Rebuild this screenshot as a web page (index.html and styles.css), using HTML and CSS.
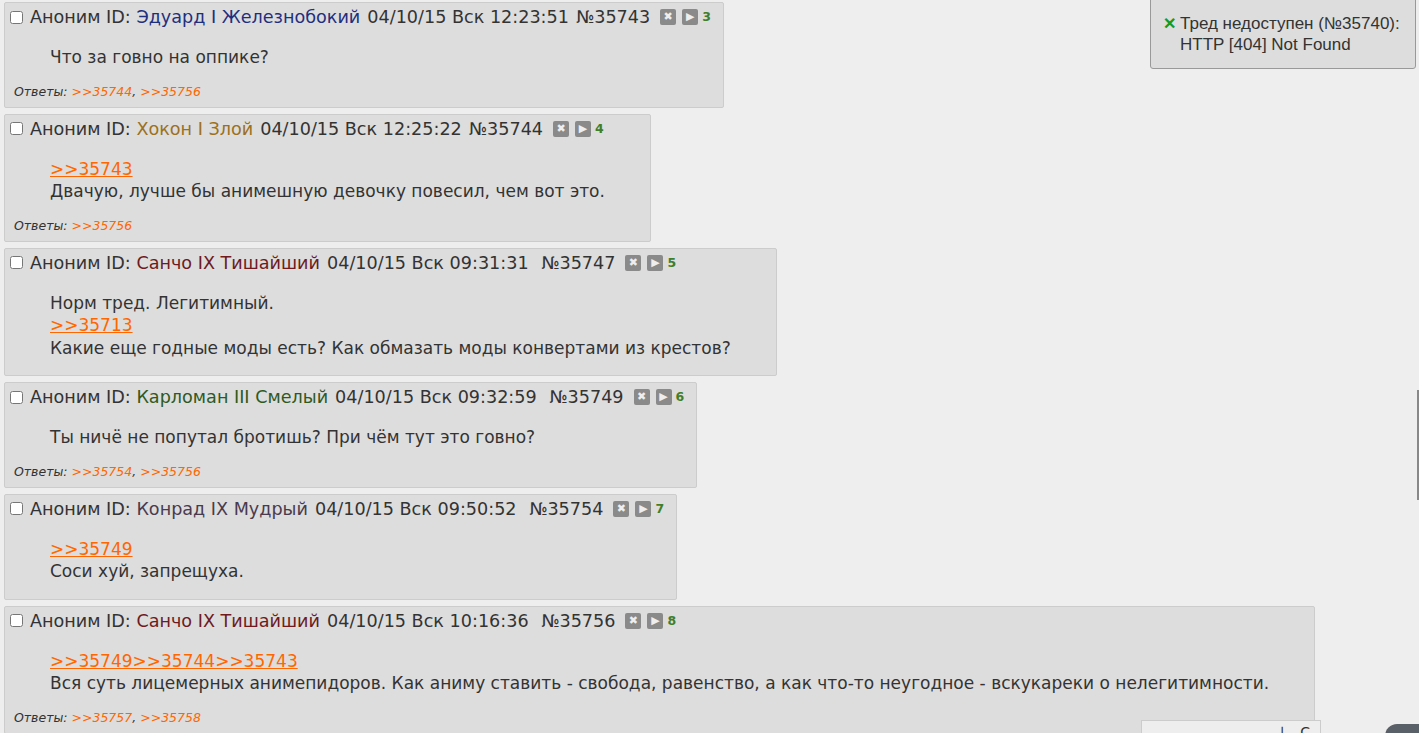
FILE: index.html
```html
<!DOCTYPE html>
<html lang="ru">
<head>
  <meta charset="UTF-8">
  <title>Тред</title>
  <link rel="stylesheet" href="styles.css">
</head>
<body>
  <div class="thread">
    <div class="post">
      <div class="head">
        <input type="checkbox">
        <span class="anon">Аноним ID: <span class="name blue">Эдуард I Железнобокий</span></span>
        <span>04/10/15 Вск 12:23:51</span>
        <span>№35743</span>
        <span class="btns"><span class="btn">✖</span><span class="btn">▶</span></span>
        <span class="count">3</span>
      </div>
      <div class="msg">Что за говно на оппике?</div>
      <div class="refs">Ответы: <a href="#">&gt;&gt;35744</a>, <a href="#">&gt;&gt;35756</a></div>
    </div>

    <div class="post">
      <div class="head">
        <input type="checkbox">
        <span class="anon">Аноним ID: <span class="name gold">Хокон I Злой</span></span>
        <span>04/10/15 Вск 12:25:22</span>
        <span>№35744</span>
        <span class="btns"><span class="btn">✖</span><span class="btn">▶</span></span>
        <span class="count">4</span>
      </div>
      <div class="msg"><a href="#">&gt;&gt;35743</a><br>Двачую, лучше бы анимешную девочку повесил, чем вот это.</div>
      <div class="refs">Ответы: <a href="#">&gt;&gt;35756</a></div>
    </div>

    <div class="post">
      <div class="head">
        <input type="checkbox">
        <span class="anon">Аноним ID: <span class="name red">Санчо IX Тишайший</span></span>
        <span>04/10/15 Вск 09:31:31&nbsp;</span>
        <span>№35747</span>
        <span class="btns"><span class="btn">✖</span><span class="btn">▶</span></span>
        <span class="count">5</span>
      </div>
      <div class="msg">Норм тред. Легитимный.<br><a href="#">&gt;&gt;35713</a><br>Какие еще годные моды есть? Как обмазать моды конвертами из крестов?</div>
    </div>

    <div class="post">
      <div class="head">
        <input type="checkbox">
        <span class="anon">Аноним ID: <span class="name green">Карломан III Смелый</span></span>
        <span>04/10/15 Вск 09:32:59&nbsp;</span>
        <span>№35749</span>
        <span class="btns"><span class="btn">✖</span><span class="btn">▶</span></span>
        <span class="count">6</span>
      </div>
      <div class="msg">Ты ничё не попутал бротишь? При чём тут это говно?</div>
      <div class="refs">Ответы: <a href="#">&gt;&gt;35754</a>, <a href="#">&gt;&gt;35756</a></div>
    </div>

    <div class="post">
      <div class="head">
        <input type="checkbox">
        <span class="anon">Аноним ID: <span class="name plum">Конрад IX Мудрый</span></span>
        <span>04/10/15 Вск 09:50:52&nbsp;</span>
        <span>№35754</span>
        <span class="btns"><span class="btn">✖</span><span class="btn">▶</span></span>
        <span class="count">7</span>
      </div>
      <div class="msg"><a href="#">&gt;&gt;35749</a><br>Соси хуй, запрещуха.</div>
    </div>

    <div class="post">
      <div class="head">
        <input type="checkbox">
        <span class="anon">Аноним ID: <span class="name red">Санчо IX Тишайший</span></span>
        <span>04/10/15 Вск 10:16:36&nbsp;</span>
        <span>№35756</span>
        <span class="btns"><span class="btn">✖</span><span class="btn">▶</span></span>
        <span class="count">8</span>
      </div>
      <div class="msg"><a href="#">&gt;&gt;35749&gt;&gt;35744&gt;&gt;35743</a><br>Вся суть лицемерных анимепидоров. Как аниму ставить - свобода, равенство, а как что-то неугодное - вскукареки о нелегитимности.</div>
      <div class="refs">Ответы: <a href="#">&gt;&gt;35757</a>, <a href="#">&gt;&gt;35758</a></div>
    </div>
  </div>

  <div class="notice">
    <span class="cross">✕</span>
    <div>Тред недоступен (№35740):<br>HTTP [404] Not Found</div>
  </div>

  <div class="panel"><span>↓</span><span>C</span></div>
  <div class="bubble"></div>
  <div class="scroll"></div>
</body>
</html>
```

FILE: styles.css
```css
*{
  box-sizing: border-box;
}
body{
  margin: 0;
  background: #eee;
  color: #333;
  font-family: "DejaVu Sans", Verdana, sans-serif;
  font-size: 17px;
  overflow: hidden;
}
.thread{
  display: flex;
  flex-direction: column;
  align-items: flex-start;
  gap: 6px;
  padding: 2px 0 0 4px;
}
.post{
  background: #ddd;
  border: 1px solid #ccc;
  border-radius: 2px;
  padding: 3px 5px 7px 5px;
}
.head{
  display: flex;
  align-items: center;
  gap: 7px;
  height: 22px;
  padding-right: 7px;
  font-size: 17.6px;
  line-height: 22px;
  white-space: nowrap;
}
.head input{
  margin: 0 0 0 0;
  width: 13px;
  height: 13px;
}
.name.blue{ color: #1f2f7f; }
.name.gold{ color: #9c7020; }
.name.red{ color: #6e1a1f; }
.name.green{ color: #2f5a1d; }
.name.plum{ color: #4a3a4e; }

.btns{
  display: flex;
  gap: 6px;
  margin-left: 3px;
}
.btn{
  width: 16px;
  height: 16px;
  background: #8a8a8a;
  color: #eee;
  border-radius: 2px;
  font-size: 11px;
  line-height: 16px;
  text-align: center;
  font-weight: bold;
}
.count{
  color: #3f7f2a;
  font-size: 12.5px;
  font-weight: bold;
  margin-left: -3px;
}
.msg{
  margin: 18px 40px 9px 40px;
  line-height: 22.5px;
}
a{
  color: #ff6600;
}
.refs{
  margin: 15px 0 0 4px;
  height: 16px;
  font-size: 12.5px;
  font-style: italic;
  line-height: 16px;
}
.refs a{
  text-decoration: none;
}
.notice{
  position: fixed;
  top: -1px;
  left: 1150px;
  width: 266px;
  height: 70px;
  background: #ddd;
  border: 1px solid #999;
  border-radius: 0 0 3px 3px;
  padding: 13px 8px 0 12px;
  display: flex;
  gap: 4px;
  font-family: "Liberation Sans", Arial, sans-serif;
  font-size: 17px;
  line-height: 21px;
  color: #333;
  white-space: nowrap;
}
.cross{
  color: #1a9a1a;
  font-weight: bold;
  font-size: 16px;
}
.panel{
  position: fixed;
  left: 1141px;
  top: 720px;
  width: 180px;
  height: 30px;
  background: #eee;
  border: 1px solid #ccc;
  display: flex;
  justify-content: flex-end;
  gap: 12px;
  padding: 0 10px;
  font-size: 14px;
  line-height: 22px;
  color: #333;
}
.bubble{
  position: fixed;
  left: 1385px;
  top: 724px;
  width: 50px;
  height: 30px;
  background: #5a6068;
  border-radius: 12px;
}
.scroll{
  position: fixed;
  left: 1417px;
  top: 390px;
  width: 2px;
  height: 110px;
  background: #888;
}
```
